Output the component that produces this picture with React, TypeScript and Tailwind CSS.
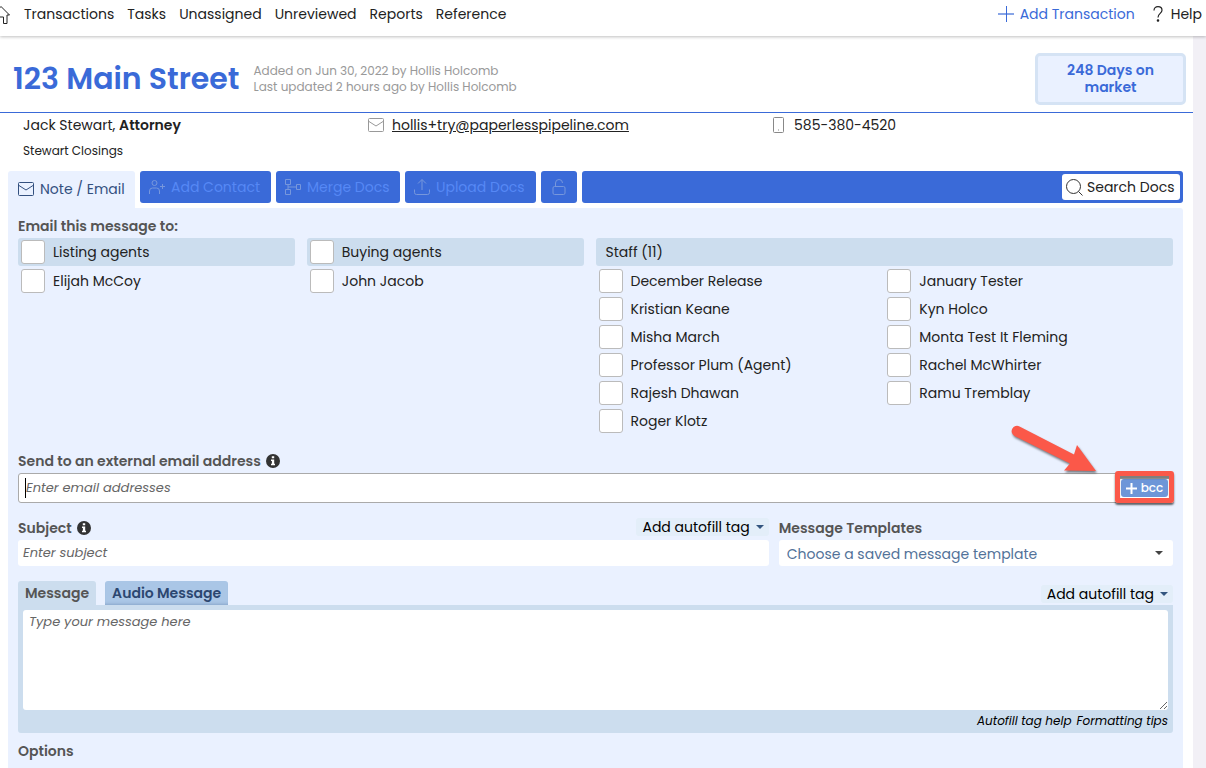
import React, { useState } from 'react';

const navLinks = ['Transactions', 'Tasks', 'Unassigned', 'Unreviewed', 'Reports', 'Reference'];

const staff = [
  ['December Release', 'Kristian Keane', 'Misha March', 'Professor Plum (Agent)', 'Rajesh Dhawan', 'Roger Klotz'],
  ['January Tester', 'Kyn Holco', 'Monta Test It Fleming', 'Rachel McWhirter', 'Ramu Tremblay'],
];

function EnvelopeIcon() {
  return (
    <svg className="w-4 h-4 shrink-0" viewBox="0 0 16 16" fill="none" stroke="currentColor">
      <rect x="0.5" y="1.5" width="15" height="13" rx="1" />
      <path d="M1 4.5 8 9l7-4.5" />
    </svg>
  );
}

function InfoIcon() {
  return (
    <svg className="w-3.5 h-3.5" viewBox="0 0 14 14">
      <circle cx="7" cy="7" r="7" fill="#333" />
      <path d="M5.8 2.3h2.4v1.9H5.8zM5 5.4h3.2v4.4H9v1.5H5V9.8h.9V6.9H5z" fill="#fff" />
    </svg>
  );
}

function Caret({ className = '' }: { className?: string }) {
  return (
    <svg className={`w-2 h-1 ${className}`} viewBox="0 0 8 4" fill="currentColor">
      <path d="M0 0h8L4 4z" />
    </svg>
  );
}

function Recipient({ name, header = false }: { name: string; header?: boolean }) {
  return (
    <label className={`flex items-center h-7 pl-[3px] gap-2 ${header ? 'bg-[#ccddee] rounded-[3px] mb-px mr-3' : ''}`}>
      <input type="checkbox" className="appearance-none w-6 h-6 shrink-0 bg-white border border-[#bbb] rounded-[3px] checked:bg-[#3a6ad8]" />
      {name}
    </label>
  );
}

function AutofillButton() {
  return (
    <button type="button" className="flex items-center gap-1.5 h-[18px] pl-1.5 pr-[5px] bg-[#e3eef9] rounded-[3px] text-black">
      Add autofill tag <Caret className="text-[#33557f]" />
    </button>
  );
}

export default function App() {
  const [messageTab, setMessageTab] = useState('Message');

  const toolButton = 'flex items-center gap-1.5 h-8 px-[9px] bg-[#3a6ad8] text-[#5688f5] rounded-[3px] whitespace-nowrap';

  return (
    <div className="bg-[#f2f0f6] text-[#222] font-['Poppins','Inter',sans-serif] text-[14px] leading-5">
      {/* Top navigation */}
      <header className="relative flex items-start justify-between h-9 pt-1 pr-1 bg-white shadow-[0_1px_3px_rgba(0,0,0,0.25)]">
        <nav className="flex items-center gap-[13px]">
          <a href="#" aria-label="Home" className="w-[11px] overflow-hidden flex justify-end">
            <svg className="w-5 h-5 shrink-0" viewBox="0 0 20 20" fill="none" stroke="#222">
              <path d="M1.5 11 10 2.500 18.500 11H16v8.500h-3.500V13h-5v6.500H4V11z" />
            </svg>
          </a>
          {navLinks.map((link) => (
            <a key={link} href="#">{link}</a>
          ))}
        </nav>
        <div className="flex items-center gap-[18px]">
          <a href="#" className="flex items-center gap-1.5 text-[#3a6ad8]">
            <svg className="w-4 h-4" viewBox="0 0 16 16" stroke="currentColor">
              <path d="M8.500 0v16" />
              <path d="M0 8h16" strokeWidth="1.2" />
            </svg>
            Add Transaction
          </a>
          <a href="#" className="flex items-center gap-2">
            <svg className="w-2.5 h-4" viewBox="0 0 10 16" fill="none" stroke="#222" strokeWidth="1.2">
              <path d="M1 4.500C1 2 2.600.7 5 .7s4 1.400 4 3.500C9 7.500 5 7.300 5 11.500" />
              <circle cx="5" cy="14.500" r="0.700" fill="#222" />
            </svg>
            Help
          </a>
        </div>
      </header>

      <main className="bg-white mr-[13px]">
        {/* Transaction title */}
        <div className="flex items-center justify-between h-[77px] pt-2.5 pl-[13px] pr-[7px] border-b border-[#3a6ad8]">
          <div className="flex items-center gap-3.5">
            <h1 className="text-[30px] leading-10 font-semibold text-[#3a6ad8]">123 Main Street</h1>
            <p className="text-[12px] leading-4 text-[#999]">
              Added on Jun 30, 2022 by Hollis Holcomb<br />
              Last updated 2 hours ago by Hollis Holcomb
            </p>
          </div>
          <div className="w-[151px] px-5 py-[6px] bg-[#eaf1ff] border-[3px] border-[#d5e3f4] rounded-[5px] text-center font-semibold leading-[17px] text-[#3a6ad8]">
            248 Days on market
          </div>
        </div>

        {/* Contact details */}
        <div className="flex pt-0.5 h-[58px] pl-[23px] pr-2">
          <div className="w-[345px]">
            <p>Jack Stewart, <b className="font-semibold">Attorney</b></p>
            <p className="mt-1.5 text-[12px]">Stewart Closings</p>
          </div>
          <div className="flex items-center gap-2 w-[405px] h-5">
            <span className="text-[#999]"><EnvelopeIcon /></span>
            <a href="#" className="underline">hollis+try@paperlesspipeline.com</a>
          </div>
          <div className="flex items-center gap-2.5 h-5">
            <svg className="w-[11px] h-4" viewBox="0 0 11 16" fill="none" stroke="#888">
              <rect x="0.500" y="0.500" width="10" height="15" rx="1" />
              <path d="M5 13h1" />
            </svg>
            585-380-4520
          </div>
        </div>

        {/* Toolbar */}
        <div className="flex gap-[5px] ml-2 mr-2.5">
          <button className="flex items-center gap-1.5 w-[127px] h-[37px] px-2.5 pb-0.5 bg-[#eaf1ff] rounded-t-[3px] text-[#33507f] whitespace-nowrap">
            <EnvelopeIcon /> Note / Email
          </button>
          <button className={`${toolButton} w-[131px]`}>
            <svg className="w-4 h-4 shrink-0 text-[#7797dc]" viewBox="0 0 16 16" fill="none" stroke="currentColor">
              <circle cx="5.500" cy="4" r="2.500" />
              <path d="M.5 15v-3a3 3 0 0 1 3-3h4a3 3 0 0 1 3 3v3M11 7.500h5M13.500 5v5" />
            </svg>
            Add Contact
          </button>
          <button className={`${toolButton} w-[124px]`}>
            <svg className="w-4 h-4 shrink-0 text-[#7797dc]" viewBox="0 0 16 16" fill="none" stroke="currentColor">
              <path d="M.5.500h5v5h-5zM.5 10.500h5v5h-5zM11.500 5.500h4v5h-4zM3 5.500v5M3 8h8.500" />
            </svg>
            Merge Docs
          </button>
          <button className={`${toolButton} w-[131px]`}>
            <svg className="w-4 h-4 shrink-0 text-[#7797dc]" viewBox="0 0 16 16" fill="none" stroke="currentColor">
              <path d="M.5 10.500v3a2 2 0 0 0 2 2h11a2 2 0 0 0 2-2v-3M8 11V.700M4 4.500l4-4 4 4" />
            </svg>
            Upload Docs
          </button>
          <button aria-label="Unlock" className={`${toolButton} w-9 justify-center`}>
            <svg className="w-4 h-4 shrink-0 text-[#7797dc]" viewBox="0 0 16 16" fill="none" stroke="currentColor">
              <rect x="2" y="7.500" width="12" height="8" rx="1.500" />
              <path d="M4.500 7.500V4a3.500 3.500 0 0 1 7 0" />
            </svg>
          </button>
          <div className="flex flex-1 items-center justify-end h-8 pr-[3px] bg-[#3a6ad8] rounded-[3px]">
            <button className="flex items-center gap-1 h-[26px] w-[118px] px-1 bg-white rounded-[3px] whitespace-nowrap">
              <svg className="w-[17px] h-[17px] shrink-0" viewBox="0 0 17 17" fill="none" stroke="#333">
                <circle cx="7.500" cy="7.500" r="7" />
                <path d="m12.500 12.500 4 4" />
              </svg>
              Search Docs
            </button>
          </div>
        </div>

        {/* Message form */}
        <form className="ml-2 mr-2.5 px-2.5 pt-2 pb-4 bg-[#eaf1ff] rounded-tr-[3px]" onSubmit={(e) => e.preventDefault()}>
          <h2 className="font-semibold text-[#555]">Email this message to:</h2>
          <div className="grid grid-cols-4 mt-0.5 pb-4">
            <div>
              <Recipient name="Listing agents" header />
              <Recipient name="Elijah McCoy" />
            </div>
            <div>
              <Recipient name="Buying agents" header />
              <Recipient name="John Jacob" />
            </div>
            <div className="col-span-2">
              <h3 className="h-7 mb-px pl-2.5 leading-7 bg-[#ccddee] rounded-[3px]">Staff (11)</h3>
              <div className="grid grid-cols-2">
                {staff.map((column, i) => (
                  <div key={i}>
                    {column.map((name) => <Recipient key={name} name={name} />)}
                  </div>
                ))}
              </div>
            </div>
          </div>

          <label htmlFor="emails" className="flex items-center gap-[5px] font-semibold text-[#555]">
            Send to an external email address <InfoIcon />
          </label>
          <div className="relative flex items-center justify-between mt-0.5 h-[30px] pl-1.5 pr-1 bg-white border border-[#aaa] rounded-[3px]">
            <span className="w-px h-5 bg-black" />
            <input id="emails" placeholder="Enter email addresses" className="flex-1 outline-none text-[13px] placeholder:italic placeholder:text-[#666]" />
            <button type="button" className="flex items-center justify-center gap-1 w-[47px] h-[18px] bg-[#6d96d8] rounded-[3px] text-white text-[12px] font-medium">
              <svg className="w-[11px] h-[11px]" viewBox="0 0 11 11" stroke="currentColor" strokeWidth="2">
                <path d="M5.500 0v11M0 5.500h11" />
              </svg>
              bcc
            </button>
            {/* Callout over the bcc button */}
            <div className="absolute -right-0.5 -top-[3px] w-[59px] h-8 border-[5px] border-[#fb5849] rounded-[3px] shadow-[0_2px_2px_rgba(0,0,0,0.6),inset_0_3px_1px_rgba(0,0,0,0.5)] pointer-events-none" />
            <svg className="absolute right-[71px] -top-[51px] w-[92px] h-[56px] pointer-events-none drop-shadow-[1px_2px_1px_rgba(0,0,0,0.5)]" viewBox="0 0 92 56" fill="#fb5849">
              <path d="M10.500 3.500 65 31.500 68 22 87 48 55 47.500 61 40.500 5.500 13A5.300 5.300 0 0 1 10.500 3.500z" />
            </svg>
          </div>

          <div className="flex gap-2.5 mt-[15px]">
            <div className="w-[65%]">
              <div className="flex items-start justify-between h-[22px]">
                <label htmlFor="subject" className="flex items-center gap-[5px] font-semibold text-[#555]">
                  Subject <InfoIcon />
                </label>
                <AutofillButton />
              </div>
              <input id="subject" placeholder="Enter subject" className="w-full h-[26px] px-[5px] bg-white rounded-[3px] text-[13px] placeholder:italic placeholder:text-[#666]" />
            </div>
            <div className="flex-1">
              <label htmlFor="template" className="block h-[22px] font-semibold text-[#555]">Message Templates</label>
              <div className="relative">
                <select id="template" className="appearance-none w-full h-[26px] px-2 pt-0.5 bg-white rounded-[3px] text-[#527299]">
                  <option>Choose a saved message template</option>
                </select>
                <Caret className="absolute right-2.5 top-[11px] text-[#444] pointer-events-none" />
              </div>
            </div>
          </div>

          <div className="flex items-end justify-between h-6 mt-[15px]">
            <div className="flex gap-[9px] font-semibold">
              {['Message', 'Audio Message'].map((tab) => (
                <button
                  key={tab}
                  type="button"
                  onClick={() => setMessageTab(tab)}
                  className={`h-6 px-[7px] rounded-t-[3px] ${
                    messageTab === tab ? 'bg-[#ccddee] text-[#555]' : 'bg-[#aac6e6] text-[#2c4770] shadow-[inset_0_-3px_3px_-2px_rgba(60,90,140,0.3)]'
                  }`}
                >
                  {tab}
                </button>
              ))}
            </div>
            <div className="pb-0.5"><AutofillButton /></div>
          </div>
          <div className="h-32 p-[5px] bg-[#ccddee] rounded-b-[3px]">
            <textarea aria-label="Message" placeholder="Type your message here" className="block w-full h-[100px] px-1.5 py-0.5 bg-white rounded-[3px] text-[13px] placeholder:italic placeholder:text-[#666]" />
            <div className="flex justify-end gap-[5px] pt-px text-[12px] italic text-black">
              <a href="#">Autofill tag help</a>
              <a href="#">Formatting tips</a>
            </div>
          </div>
          <h2 className="mt-2 font-semibold text-[#555]">Options</h2>
        </form>
      </main>
    </div>
  );
}
